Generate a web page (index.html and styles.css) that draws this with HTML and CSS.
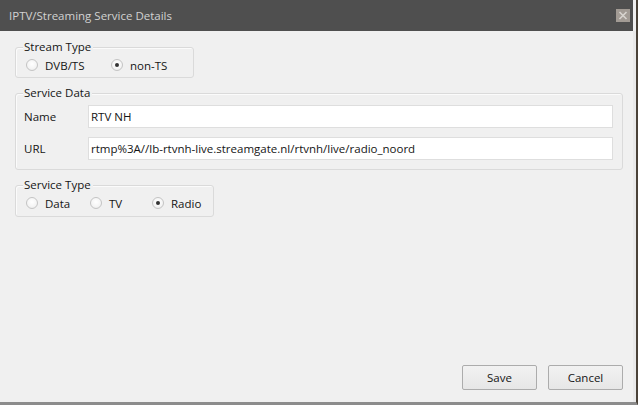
FILE: index.html
```html
<!DOCTYPE html>
<html>
<head>
<meta charset="utf-8">
<link rel="stylesheet" href="styles.css">
</head>
<body>
<div class="window">
  <div class="titlebar">
    <span class="title">IPTV/Streaming Service Details</span>
    <span class="close">
      <svg width="14" height="13" viewBox="0 0 14 13"><rect width="14" height="13" fill="#a29b94"/><path d="M3.5 3 L10.5 10 M10.5 3 L3.5 10" stroke="#d8d4cf" stroke-width="1.6"/></svg>
    </span>
  </div>
  <div class="content">
    <div class="group group-stream">
      <span class="legend">Stream Type</span>
      <div class="radios">
        <label class="radio r-dvb"><span class="dot"></span>DVB/TS</label>
        <label class="radio checked"><span class="dot"></span>non-TS</label>
      </div>
    </div>
    <div class="group group-data">
      <span class="legend">Service Data</span>
      <div class="row"><span class="lbl">Name</span><div class="input">RTV NH</div></div>
      <div class="row"><span class="lbl">URL</span><div class="input">rtmp%3A//lb-rtvnh-live.streamgate.nl/rtvnh/live/radio_noord</div></div>
    </div>
    <div class="group group-type">
      <span class="legend">Service Type</span>
      <div class="radios">
        <label class="radio r-data"><span class="dot"></span>Data</label>
        <label class="radio r-tv"><span class="dot"></span>TV</label>
        <label class="radio checked"><span class="dot"></span>Radio</label>
      </div>
    </div>
    <div class="spacer"></div>
    <div class="buttons">
      <button class="btn">Save</button>
      <button class="btn">Cancel</button>
    </div>
  </div>
</div>
</body>
</html>
```
FILE: styles.css
```css
html, body {
  margin: 0;
  padding: 0;
  background: #f0f0f0;
}
body {
  font-family: "Open Sans", "Noto Sans", sans-serif;
  font-size: 11.5px;
  color: #151515;
}
.window {
  width: 636px;
  height: 402px;
  display: flex;
  flex-direction: column;
  background: #f0f0f0;
  border-right: 2px solid #4a4238;
  border-bottom: 3px solid #8c8c8c;
}
.titlebar {
  height: 31px;
  flex: none;
  background: #4f4f4f;
  display: flex;
  align-items: center;
  padding: 0 3px 0 9px;
  box-sizing: border-box;
  margin-right: 3px;
}
.title {
  color: #d2d2d2;
  font-size: 11.5px;
  flex: 1;
  margin-top: -1px;
}
.close {
  display: flex;
  margin-top: -1px;
}
.content {
  flex: 1;
  display: flex;
  flex-direction: column;
  padding: 0 10px 12px 15px;
  border-right: 3px solid #e9e9e9;
}
.group {
  display: flex;
  flex-direction: column;
  align-items: flex-start;
  padding: 0 8px 0 8px;
  border: 1px solid #dadada;
  border-radius: 3px;
  box-shadow: inset 1px 1px 0 #fbfbfb;
}
.legend {
  margin-top: -7px;
  padding: 0 2px 0 1px;
  margin-left: -1px;
  height: 12px;
  line-height: 12px;
  background: #f0f0f0;
}
.group-stream {
  margin-top: 16px;
  width: 179px;
  box-sizing: border-box;
  padding-bottom: 4px;
}
.group-data {
  margin-top: 15px;
  padding: 0 9px 9px 8px;
  align-items: stretch;
}
.group-data .legend { align-self: flex-start; }
.group-type {
  margin-top: 15px;
  width: 199px;
  box-sizing: border-box;
  padding-bottom: 5px;
}
.radios {
  display: flex;
  align-items: center;
  height: 16px;
  margin-top: 4px;
}
.radio {
  display: flex;
  align-items: center;
  gap: 7px;
  margin-left: 2px;
}
.radio + .radio { margin-left: 0; }
.r-dvb { width: 85px; }
.r-data { width: 64px; }
.r-tv { width: 62px; }
.dot {
  width: 10px;
  height: 10px;
  border-radius: 50%;
  border: 1px solid #c4c4c4;
  background: radial-gradient(circle at 50% 40%, #ffffff 0%, #f4f4f4 60%, #e4e4e4 100%);
  display: flex;
  align-items: center;
  justify-content: center;
}
.checked .dot::after {
  content: "";
  width: 4px;
  height: 4px;
  border-radius: 50%;
  background: #333;
}
.row {
  display: flex;
  align-items: center;
  margin-top: 9px;
}
.group-data .legend + .row { margin-top: 6px; }
.lbl {
  width: 64px;
}
.input {
  flex: 1;
  height: 23px;
  box-sizing: border-box;
  background: #fff;
  border: 1px solid #dedede;
  padding: 0 2px;
  line-height: 21px;
  white-space: nowrap;
}
.spacer { flex: 1; }
.buttons {
  display: flex;
  justify-content: flex-end;
  gap: 11px;
}
.btn {
  width: 75px;
  height: 25px;
  font-family: inherit;
  font-size: 11.5px;
  color: #151515;
  border: 1px solid #acacac;
  border-radius: 2px;
  background: linear-gradient(#f2f2f2, #e6e6e6);
  padding: 0;
}
```
